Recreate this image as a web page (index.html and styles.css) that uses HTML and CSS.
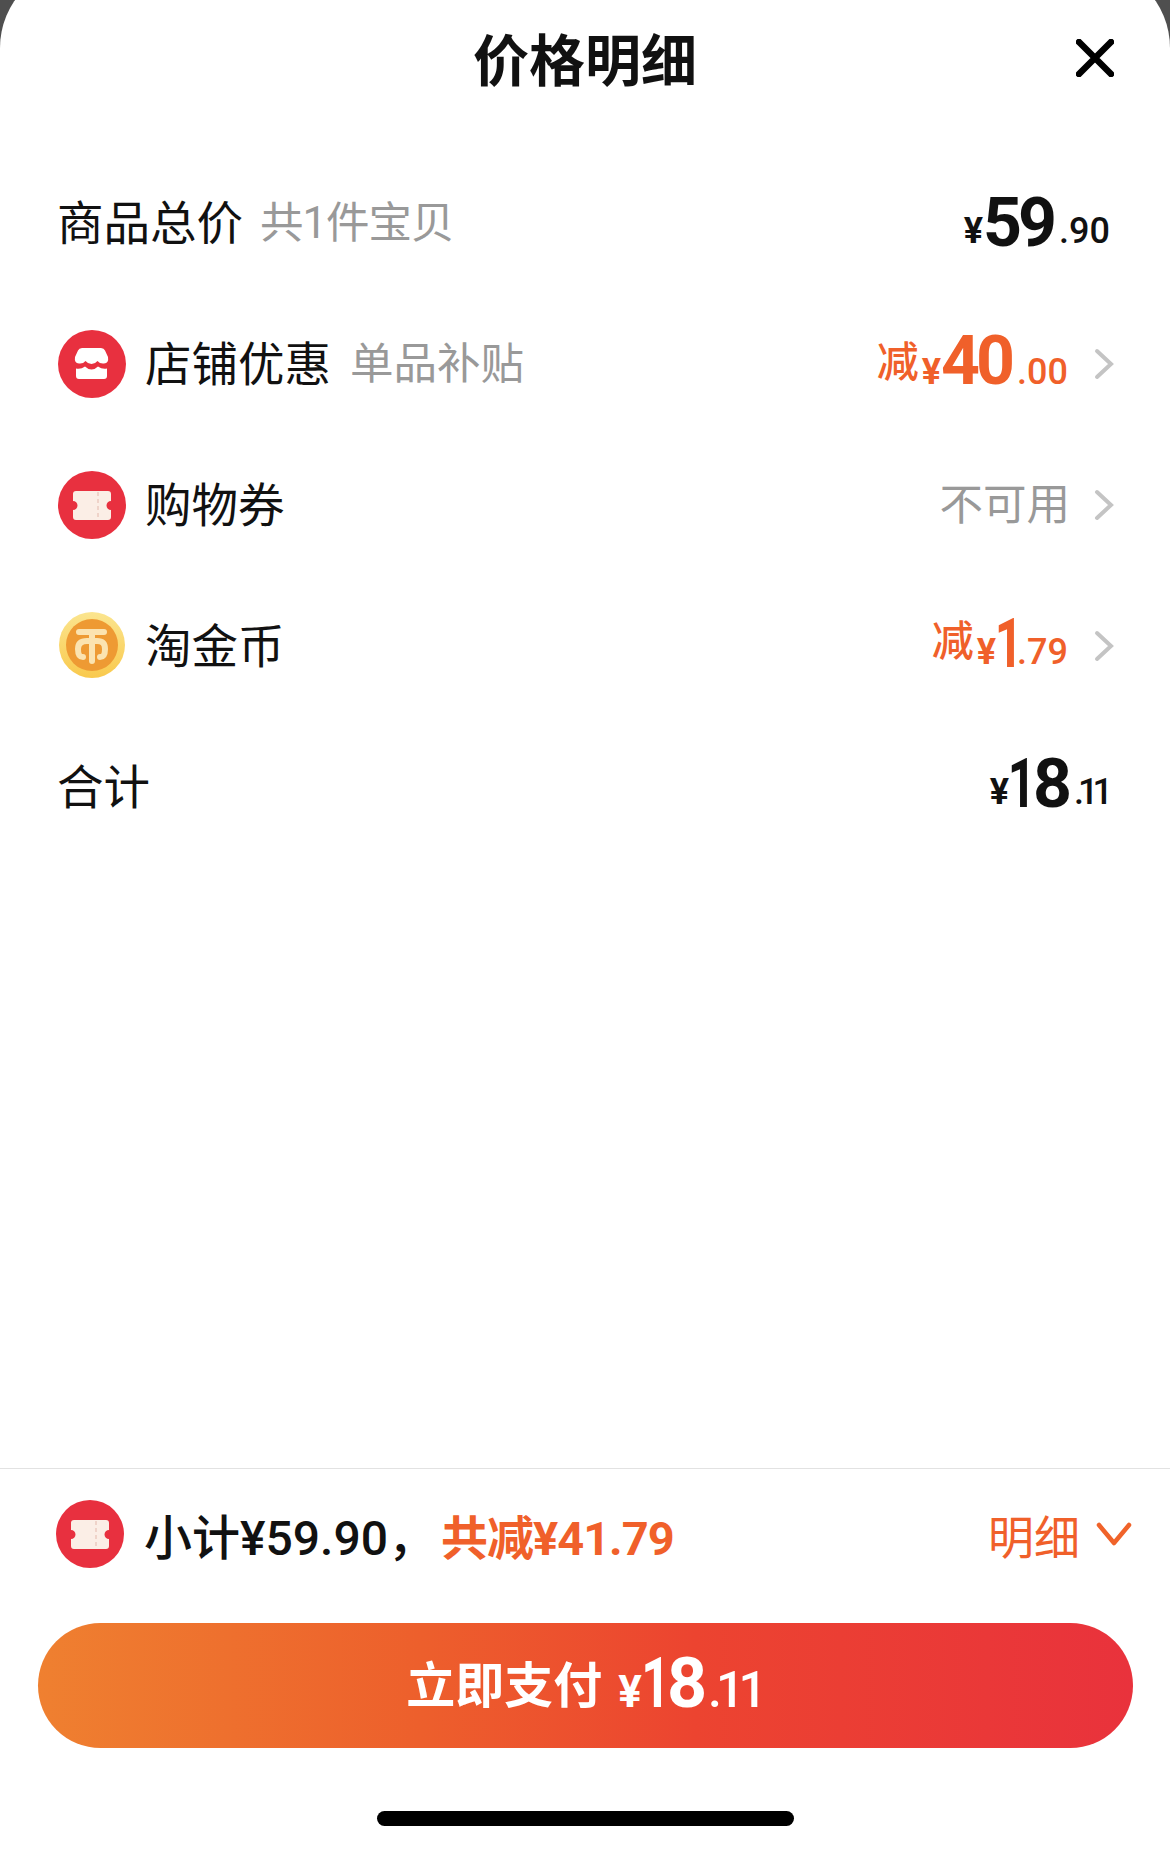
FILE: index.html
```html
<!DOCTYPE html>
<html lang="zh-CN">

<head>
    <meta charset="utf-8">
    <meta name="viewport" content="width=device-width, initial-scale=1.0">
    <title>价格明细</title>
    <link rel="stylesheet" href="styles.css">
</head>

<body>
    <main class="sheet">
        <header class="sheet-header">
            <h1 class="sheet-title">价格明细</h1>
            <svg class="close-icon" width="38" height="38" viewBox="0 0 38 38" aria-hidden="true">
                <path d="M3 3L35 35M35 3L3 35" fill="none" stroke="#000" stroke-width="6.5" stroke-linecap="round" />
            </svg>
        </header>

        <section class="rows">
            <div class="row">
                <span class="row-label">商品总价</span>
                <span class="row-note row-note-tight">共1件宝贝</span>
                <div class="price">
                    <span class="yen">¥</span><span class="int">59</span><span class="dec">.90</span>
                </div>
            </div>

            <div class="row">
                <svg class="row-icon" width="68" height="68" viewBox="0 0 68 68" aria-hidden="true">
                    <circle cx="34" cy="34" r="34" fill="#e8303f" />
                    <path fill="#fff"
                        d="M24 18H43Q46 18 47 20.5L50 27Q51 33 46 33.5Q42 34 39.5 31Q37 34 33.5 34Q30 34 27.5 31Q25 34 21 33.5Q16 33 17 27L20 20.5Q21 18 24 18Z" />
                    <path fill="#fff"
                        d="M18 38.5Q23 39.5 27 36.5Q30 39.5 33.5 39.5Q37 39.5 40 36.5Q44 39.5 49 38.5V46Q49 49 46 49H21Q18 49 18 46Z" />
                </svg>
                <span class="row-label">店铺优惠</span>
                <span class="row-note">单品补贴</span>
                <div class="price price-off price-flat">
                    <span class="off">减</span><span class="yen">¥</span><span class="int">40</span><span class="dec">.00</span>
                </div>
                <svg class="chevron" width="20" height="32" viewBox="0 0 20 32" aria-hidden="true">
                    <path d="M3 3L17 16L3 29" fill="none" stroke="#c4c4c4" stroke-width="4" stroke-linecap="round" />
                </svg>
            </div>

            <div class="row">
                <svg class="row-icon" width="68" height="68" viewBox="0 0 68 68" aria-hidden="true">
                    <circle cx="34" cy="34" r="34" fill="#e8303f" />
                    <path fill="#fbeee6"
                        d="M18 20H50Q53 20 53 23V30A4.5 4.5 0 0 0 53 39V46Q53 49 50 49H18Q15 49 15 46V39A4.5 4.5 0 0 0 15 30V23Q15 20 18 20Z" />
                    <path d="M40 21V48" stroke="#efd3c9" stroke-width="2" stroke-dasharray="4 3" />
                </svg>
                <span class="row-label">购物券</span>
                <span class="row-value">不可用</span>
                <svg class="chevron" width="20" height="32" viewBox="0 0 20 32" aria-hidden="true">
                    <path d="M3 3L17 16L3 29" fill="none" stroke="#c4c4c4" stroke-width="4" stroke-linecap="round" />
                </svg>
            </div>

            <div class="row">
                <svg class="row-icon" width="68" height="68" viewBox="0 1 68 68" aria-hidden="true">
                    <defs>
                        <linearGradient id="coin-rim" x1="0" y1="0" x2="0" y2="1">
                            <stop offset="0" stop-color="#fbe58f" />
                            <stop offset="1" stop-color="#f9c94d" />
                        </linearGradient>
                    </defs>
                    <circle cx="34" cy="34" r="33" fill="url(#coin-rim)" />
                    <circle cx="34" cy="34" r="26" fill="#ee9a33" />
                    <path fill="none" stroke="#fbe3b0" stroke-width="6" stroke-linecap="round"
                        d="M21 21H46M34 21V50M25 46C21 46 20 43 20 38C20 32 24 30 29 30H39C44 30 47 32 47 38C47 43 46 46 42 46" />
                </svg>
                <span class="row-label">淘金币</span>
                <div class="price price-off price-low">
                    <span class="off">减</span><span class="yen">¥</span><span class="int int-one">1</span><span class="dec">.79</span>
                </div>
                <svg class="chevron" width="20" height="32" viewBox="0 0 20 32" aria-hidden="true">
                    <path d="M3 3L17 16L3 29" fill="none" stroke="#c4c4c4" stroke-width="4" stroke-linecap="round" />
                </svg>
            </div>

            <div class="row">
                <span class="row-label">合计</span>
                <div class="price price-total">
                    <span class="yen">¥</span><span class="int int-one">1</span><span class="int">8</span><span class="dec dec-ones">.11</span>
                </div>
            </div>
        </section>

        <footer class="sheet-footer">
            <div class="summary">
                <svg class="row-icon" width="68" height="68" viewBox="0 0 68 68" aria-hidden="true">
                    <circle cx="34" cy="34" r="34" fill="#e8303f" />
                    <path fill="#fbeee6"
                        d="M18 20H50Q53 20 53 23V30A4.5 4.5 0 0 0 53 39V46Q53 49 50 49H18Q15 49 15 46V39A4.5 4.5 0 0 0 15 30V23Q15 20 18 20Z" />
                    <path d="M40 21V48" stroke="#efd3c9" stroke-width="2" stroke-dasharray="4 3" />
                </svg>
                <span class="summary-total">小计¥59.90，</span>
                <span class="summary-off">共减¥41.79</span>
                <span class="summary-link">明细</span>
                <svg class="chevron-down" width="36" height="24" viewBox="0 0 36 24" aria-hidden="true">
                    <path d="M3 3L18 21L33 3" fill="none" stroke="#f0632a" stroke-width="4.5" stroke-linecap="round" stroke-linejoin="round" />
                </svg>
            </div>
            <button class="pay-button">
                <span class="pay-text">立即支付</span>
                <span class="price price-pay"><span class="yen">¥</span><span class="int int-one">1</span><span class="int">8</span><span class="dec dec-ones">.11</span></span>
            </button>
            <div class="home-bar"></div>
        </footer>
    </main>
</body>

</html>
```

FILE: styles.css
```css
* {
    margin: 0;
    padding: 0;
    box-sizing: border-box;
}

html,
body {
    height: 1850px;
    overflow: hidden;
}

body {
    background-color: #4f4f4f;
    font-family: Roboto, 'Noto Sans CJK SC', sans-serif;
    color: #111;
}

/* top of the sheet runs off the screen, only the corner curve is visible */
.sheet {
    display: flex;
    flex-direction: column;
    height: 1886px;
    margin-top: -36px;
    padding-top: 36px;
    background-color: #fff;
    border-radius: 84px 84px 0 0;
}

.sheet-header {
    display: grid;
    grid-template-columns: 1fr auto 1fr;
    align-items: center;
    height: 120px;
    padding: 0 56px;
}

.sheet-title {
    grid-column: 2;
    padding-top: 4px;
    font-size: 56px;
    font-weight: 700;
    line-height: 1;
}

.close-icon {
    grid-column: 3;
    justify-self: end;
    margin-bottom: 4px;
}

.rows {
    padding: 32px 56px 0 58px;
}

.row {
    display: flex;
    align-items: center;
    height: 141px;
}

.row-icon {
    flex: none;
    margin-right: 20px;
}

.row-label {
    margin-left: -1px;
    padding-top: 4px;
    font-size: 46.5px;
    line-height: 1;
}

.row-note {
    margin-left: 19px;
    padding-top: 2px;
    font-size: 43.5px;
    line-height: 1;
    color: #999;
}

.row-note-tight {
    margin-left: 17px;
    letter-spacing: -1px;
}

.row-value {
    margin-left: auto;
    margin-right: -2px;
    padding-top: 2px;
    font-size: 43.5px;
    line-height: 1;
    color: #999;
}

.chevron {
    flex: none;
    margin-left: 26px;
}

.price {
    margin-left: auto;
    line-height: 1;
    white-space: nowrap;
    font-weight: 500;
}

.row>.price:last-child {
    margin-right: 4px;
}

.yen {
    font-size: 36px;
    font-weight: 700;
    vertical-align: 3px;
}

.int {
    font-size: 68px;
    font-weight: 700;
    letter-spacing: -4px;
}

/* Roboto's 1 is set much wider than the reference numerals */
.int-one {
    display: inline-block;
    margin-left: -11px;
    transform: scaleX(.72);
    transform-origin: right;
}

.dec {
    font-size: 36px;
    margin-left: 6px;
    vertical-align: 3px;
}

.dec-ones {
    letter-spacing: -6px;
    margin-right: 3px;
}

.off {
    font-size: 42px;
    font-weight: 500;
    margin-right: 3px;
    vertical-align: 7px;
}

.price-off {
    color: #f0602a;
}

.price-flat {
    padding-bottom: 6px;
}

.price-flat .yen,
.price-flat .dec {
    vertical-align: 0;
}

.price-low {
    padding-bottom: 4px;
}

.price-low .off {
    vertical-align: 11px;
}

.price-low .dec {
    margin-left: -3px;
}

.price-total {
    padding-bottom: 6px;
}

.sheet-footer {
    margin-top: auto;
    padding-bottom: 24px;
    border-top: 1px solid #e2e2e2;
}

.summary {
    display: flex;
    align-items: center;
    height: 130px;
    padding: 0 38px 0 56px;
    font-size: 48px;
    font-weight: 500;
}

.summary-off {
    margin-left: 5px;
    font-size: 47px;
    font-weight: 700;
    letter-spacing: -1px;
    color: #f0602a;
}

.summary-link {
    margin-left: auto;
    font-size: 46px;
    font-weight: 400;
    color: #f0602a;
}

.chevron-down {
    flex: none;
    margin-left: 16px;
}

.pay-button {
    display: flex;
    align-items: center;
    justify-content: center;
    gap: 16px;
    width: 1095px;
    height: 125px;
    margin: 24px 0 0 38px;
    padding-bottom: 6px;
    border: 0;
    border-radius: 63px;
    background: linear-gradient(90deg, #ef8030 0%, #ed5f2c 35%, #ec4430 60%, #e9323c 100%);
    color: #fff;
    font-family: inherit;
}

.pay-text {
    padding-bottom: 2px;
    font-size: 49px;
    font-weight: 700;
}

.price-pay {
    margin-left: 0;
}

.price-pay .yen {
    font-size: 44px;
    vertical-align: 0;
}

.price-pay .int {
    font-size: 70px;
}

.price-pay .dec {
    font-size: 50px;
    margin-left: 5px;
    letter-spacing: -6px;
    margin-right: 4px;
    vertical-align: 0;
}

.home-bar {
    width: 417px;
    height: 15px;
    margin: 63px auto 0;
    border-radius: 8px;
    background-color: #000;
}
```
